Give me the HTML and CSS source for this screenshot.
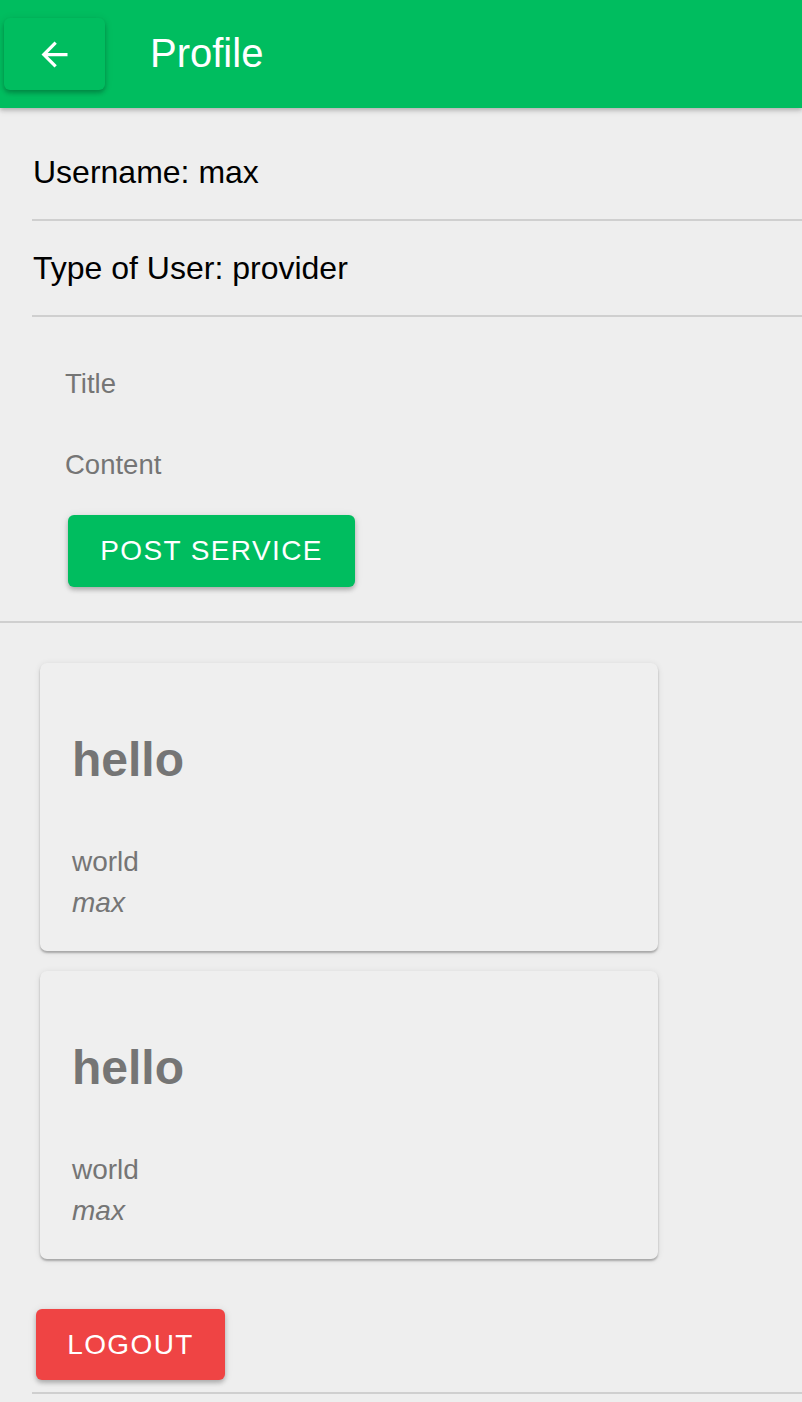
FILE: index.html
```html
<!DOCTYPE html>
<html lang="en">
<head>
<meta charset="utf-8">
<title>Profile</title>
<link rel="stylesheet" href="styles.css">
</head>
<body>
<header class="appbar">
  <button class="back-btn" aria-label="Back">
    <svg class="back-icon" viewBox="0 0 24 24" width="39" height="39"><path fill="#fff" d="M20 11H7.83l5.59-5.59L12 4l-8 8 8 8 1.41-1.41L7.83 13H20v-2z"/></svg>
  </button>
  <h1 class="appbar-title">Profile</h1>
</header>
<main class="page">
  <div class="info-row first">Username: max</div>
  <div class="info-row">Type of User: provider</div>
  <section class="post-form">
    <div class="field-label title-label">Title</div>
    <div class="field-label content-label">Content</div>
    <button class="btn btn-green">POST SERVICE</button>
  </section>
  <div class="full-divider"></div>
  <section class="cards">
    <article class="card">
      <h2 class="card-title">hello</h2>
      <p class="card-text">world</p>
      <p class="card-text card-author">max</p>
    </article>
    <article class="card">
      <h2 class="card-title">hello</h2>
      <p class="card-text">world</p>
      <p class="card-text card-author">max</p>
    </article>
  </section>
  <div class="logout-row">
    <button class="btn btn-red">LOGOUT</button>
  </div>
</main>
</body>
</html>
```
FILE: styles.css
```css
* { box-sizing: border-box; }
html, body {
  margin: 0;
  padding: 0;
  background: #eeeeee;
  font-family: "Liberation Sans", Arial, sans-serif;
}
.appbar {
  height: 108px;
  background: #00bd5f;
  display: flex;
  align-items: center;
  box-shadow: 0 2px 4px rgba(0,0,0,0.2), 0 4px 6px rgba(0,0,0,0.08);
  position: relative;
  z-index: 1;
}
.back-btn {
  margin-left: 4px;
  width: 101px;
  height: 72px;
  border: none;
  border-radius: 6px;
  background: #00bd5f;
  display: flex;
  align-items: center;
  justify-content: center;
  padding: 0;
  box-shadow: 0 3px 4px rgba(0,0,0,0.22), 0 1px 8px rgba(0,0,0,0.1);
}
.back-icon { display: block; }
.appbar-title {
  margin: 0 0 3px 45px;
  color: #fff;
  font-weight: 400;
  font-size: 40px;
  line-height: 1;
}
.page {
  padding-bottom: 8px;
}
.info-row {
  margin-left: 32px;
  font-size: 32px;
  line-height: 48px;
  padding: 23px 0 23px 1px;
  color: #000;
  border-bottom: 2px solid #cfcfcf;
}
.info-row.first { margin-top: 17px; }
.post-form {
  padding: 52px 0 34px 64px;
}
.field-label {
  font-size: 27.5px;
  line-height: 30px;
  color: #757575;
  padding-left: 1px;
}
.content-label { margin-top: 51px; }
.btn {
  border: none;
  border-radius: 6px;
  color: #fff;
  font-family: "Liberation Sans", Arial, sans-serif;
  font-size: 28px;
  letter-spacing: 1.4px;
  height: 72px;
  padding: 0;
  box-shadow: 0 3px 4px rgba(0,0,0,0.22), 0 1px 8px rgba(0,0,0,0.1);
}
.btn-green {
  background: #00bd5f;
  margin: 35px 0 0 4px;
  width: 287px;
  display: block;
}
.btn-red {
  background: #ef4444;
  width: 189px;
  height: 71px;
}
.full-divider {
  height: 2px;
  background: #cfcfcf;
}
.cards {
  padding: 40px 0 0 40px;
  display: flex;
  flex-direction: column;
  gap: 20px;
}
.card {
  width: 618px;
  height: 288px;
  background: #efefef;
  border-radius: 7px;
  padding: 69px 32px 0 32px;
  box-shadow: 0 2px 2px rgba(0,0,0,0.25), 0 1px 6px rgba(0,0,0,0.1);
}
.card-title {
  margin: 0;
  font-size: 48px;
  line-height: 56px;
  font-weight: 700;
  color: #757575;
}
.card-text {
  margin: 0;
  font-size: 28px;
  line-height: 41px;
  color: #757575;
}
.card-title + .card-text { margin-top: 53px; }
.card-author { font-style: italic; }
.logout-row {
  margin: 50px 0 0 32px;
  padding: 0 0 12px 4px;
  border-bottom: 2px solid #cfcfcf;
}
.logout-row .btn { display: block; }
```
